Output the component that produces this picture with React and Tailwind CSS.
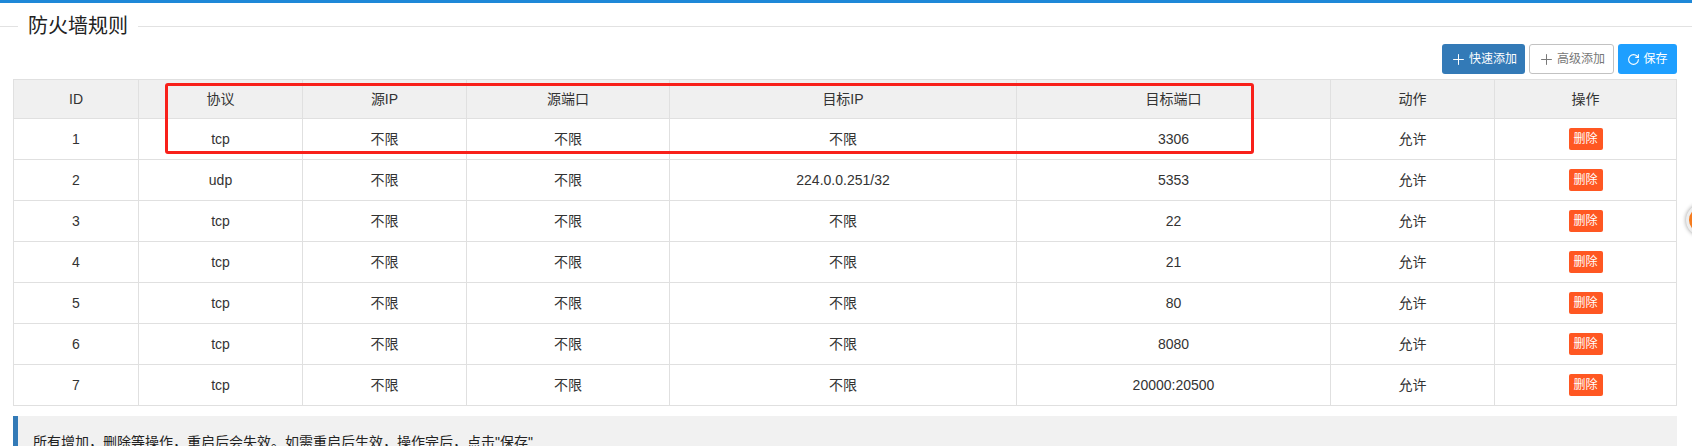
import React from 'react'
import { Plus, RotateCw } from 'lucide-react'

const rules = [
  ['1', 'tcp', '不限', '不限', '不限', '3306'],
  ['2', 'udp', '不限', '不限', '224.0.0.251/32', '5353'],
  ['3', 'tcp', '不限', '不限', '不限', '22'],
  ['4', 'tcp', '不限', '不限', '不限', '21'],
  ['5', 'tcp', '不限', '不限', '不限', '80'],
  ['6', 'tcp', '不限', '不限', '不限', '8080'],
  ['7', 'tcp', '不限', '不限', '不限', '20000:20500'],
]

const headers = ['ID', '协议', '源IP', '源端口', '目标IP', '目标端口', '动作', '操作']
const widths = ['w-[125px]', 'w-[164px]', 'w-[164px]', 'w-[203px]', 'w-[347px]', 'w-[314px]', 'w-[164px]', 'w-[182px]']

function App() {
  return (
    <div className="relative h-[446px] overflow-hidden bg-white text-[14px] text-[#333] font-['Liberation_Sans','Noto_Sans_CJK_SC',sans-serif]">
      <div className="h-[3px] bg-[#1e88d8]"></div>

      {/* Title */}
      <div className="flex items-center h-[46px]">
        <div className="w-[18px] h-px bg-[#e2e2e2]"></div>
        <h1 className="px-[10px] text-[20px] leading-[46px] text-[#222]">防火墙规则</h1>
        <div className="flex-1 h-px bg-[#e2e2e2]"></div>
      </div>

      <div className="pl-[13px] pr-[15px]">
        {/* Toolbar */}
        <div className="flex justify-end gap-1 h-[30px] -mt-[5px] text-[12px]">
          <button className="flex items-center justify-center gap-[2px] w-[83px] rounded-[3px] bg-[#337ab7] text-white">
            <Plus size={17} strokeWidth={1.4} />快速添加
          </button>
          <button className="flex items-center justify-center gap-[2px] w-[85px] rounded-[3px] border border-[#c2c2c2] bg-white text-[#777]">
            <Plus size={17} strokeWidth={1.4} />高级添加
          </button>
          <button className="flex items-center justify-center gap-[3px] w-[59px] rounded-[3px] bg-[#1e9fff] text-white">
            <RotateCw size={13} strokeWidth={2} />保存
          </button>
        </div>

        {/* Rules table */}
        <table className="mt-[5px] w-[1664px] table-fixed border-collapse text-center">
          <thead>
            <tr className="h-[39px] bg-[#f0f0f0]">
              {headers.map((h, i) => (
                <th key={h} className={`${widths[i]} border border-[#e0e0e0] font-normal`}>{h}</th>
              ))}
            </tr>
          </thead>
          <tbody>
            {rules.map((r) => (
              <tr key={r[0]} className="h-[41px]">
                {r.map((c, i) => (
                  <td key={i} className="border border-[#e0e0e0]">{c}</td>
                ))}
                <td className="border border-[#e0e0e0]">允许</td>
                <td className="border border-[#e0e0e0]">
                  <button className="w-[34px] h-[22px] rounded-[2px] bg-[#ff5722] text-[12px] text-white">删除</button>
                </td>
              </tr>
            ))}
          </tbody>
        </table>

        {/* Notice */}
        <div className="mt-[10px] h-[60px] border-l-[5px] border-[#337ab7] bg-[#f1f1f1] pl-[15px] pt-[16px] text-[#222]">
          所有增加，删除等操作，重启后会失效。如需重启后生效，操作完后，点击"保存"
        </div>
      </div>

      {/* Annotation box drawn over the table */}
      <div className="absolute left-[165px] top-[83px] w-[1089px] h-[71px] rounded-[3px] border-[3px] border-[#f8201a]"></div>

      {/* Floating widget at the page edge */}
      <div className="absolute left-[1686px] top-[204px] w-[32px] h-[32px] rounded-full border-[3px] border-[#eee] bg-[#f57c1f] shadow-[0_0_4px_rgba(0,0,0,0.4)]"></div>
    </div>
  )
}

export default App
